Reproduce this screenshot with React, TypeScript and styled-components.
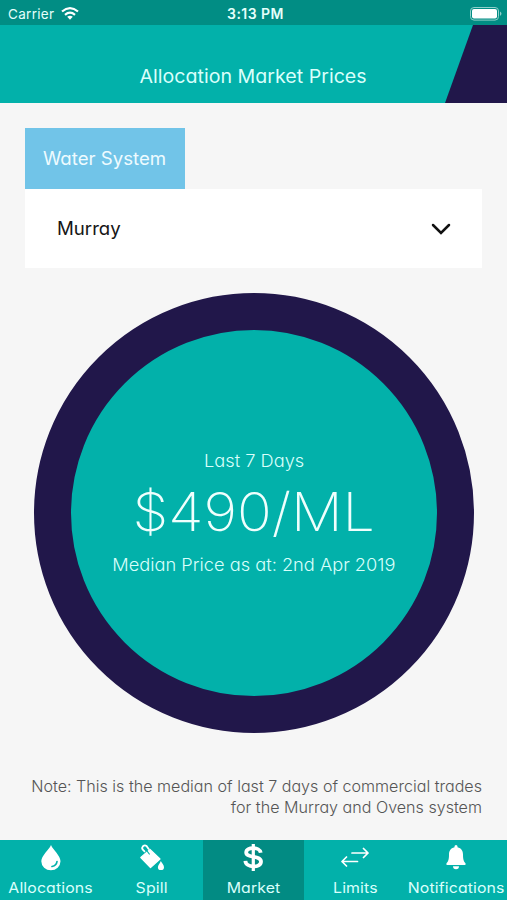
import React from "react";
import styled, { createGlobalStyle } from "styled-components";

const Global = createGlobalStyle`
  * { box-sizing: border-box; }
  body { margin: 0; background: #f6f6f6; }
`;

const Screen = styled.div`
  width: 507px;
  height: 900px;
  display: flex;
  flex-direction: column;
  overflow: hidden;
  background: #f6f6f6;
  font-family: Inter, "Liberation Sans", sans-serif;
  font-feature-settings: "cv11" 1;
`;

const StatusBar = styled.div`
  height: 25px;
  flex: none;
  display: grid;
  grid-template-columns: 1fr auto 1fr;
  align-items: center;
  padding: 2px 5px 0 8px;
  background: #018d84;
  color: #e4fffb;
  font-size: 13.5px;
  line-height: 20px;
`;

const Carrier = styled.div`
  display: flex;
  align-items: center;
  gap: 7px;
  letter-spacing: 0.3px;
  font-feature-settings: normal;
`;

const Clock = styled.div`
  padding-left: 1px;
  font-size: 14px;
  font-weight: 600;
  letter-spacing: 0.45px;
`;

const BatterySlot = styled.div`
  display: flex;
  justify-content: flex-end;
`;

const Header = styled.header`
  height: 78px;
  flex: none;
  display: flex;
  justify-content: center;
  padding-top: 38px;
  background: #02b1aa;
  position: relative;
`;

const HeaderWedge = styled.div`
  position: absolute;
  top: 0;
  right: 0;
  width: 62px;
  height: 78px;
  background: #21174a;
  clip-path: polygon(28px 0, 100% 0, 100% 100%, 0 100%);
`;

const Title = styled.h1`
  margin: 0;
  font-size: 18.5px;
  line-height: 26px;
  font-weight: 400;
  transform: scaleX(1.06);
  white-space: nowrap;
  color: #d9fffb;
`;

const Main = styled.main`
  flex: 1;
  display: flex;
  flex-direction: column;
  align-items: flex-start;
  padding: 25px 25px 0;
`;

const FieldTab = styled.div`
  width: 160px;
  height: 61px;
  display: flex;
  align-items: center;
  justify-content: center;
  background: #71c4e8;
  color: #eefbff;
  font-size: 18px;
  white-space: nowrap;
`;

const WideText = styled.span<{ $origin?: string }>`
  display: inline-block;
  transform: scaleX(1.035);
  transform-origin: ${(p) => p.$origin ?? "center"};
`;

const Select = styled.div`
  width: 457px;
  height: 79px;
  display: flex;
  align-items: center;
  justify-content: space-between;
  padding: 0 31px 0 32px;
  background: #fff;
  color: #161616;
  font-size: 18px;
`;

const Dial = styled.div`
  width: 440px;
  height: 440px;
  margin: 25px 0 0 9px;
  flex: none;
  display: flex;
  flex-direction: column;
  align-items: center;
  padding-top: 118px;
  border: 37px solid #21174a;
  border-radius: 50%;
  background: #02b1aa;
  color: #d9fffb;
  font-weight: 300;
  white-space: nowrap;
`;

const Caption = styled.div`
  font-size: 17.5px;
  line-height: 26px;
  transform: scaleX(1.042);
`;

const Price = styled.div`
  margin: 5px 0 7px;
  font-size: 53px;
  line-height: 66px;
  font-weight: 200;
  transform: scaleX(1.085);
  color: #effffd;
`;

const Note = styled.p`
  margin: 43px 0 0;
  align-self: stretch;
  text-align: right;
  font-size: 15.5px;
  line-height: 21px;
  font-weight: 300;
  transform: scaleX(1.038);
  transform-origin: right;
  white-space: nowrap;
  color: #555;
`;

const TabBar = styled.nav`
  height: 60px;
  flex: none;
  display: grid;
  grid-template-columns: repeat(5, 1fr);
  background: #02b1aa;
`;

const Tab = styled.div<{ $active?: boolean }>`
  display: flex;
  flex-direction: column;
  align-items: center;
  min-width: 0;
  padding-top: 3px;
  background: ${(p) => (p.$active ? "#028b83" : "transparent")};
  color: #d9fffb;
`;

const TabLabel = styled.span`
  font-size: 14.5px;
  line-height: 20px;
  letter-spacing: 0.1px;
  transform: scaleX(1.095);
  white-space: nowrap;
`;

const IconSlot = styled.div`
  height: 35px;
  display: flex;
  align-items: flex-start;
  color: #fff;
  svg { display: block; }
`;

const Wifi = () => (
  <svg width="18" height="13" viewBox="0 0 18 13" fill="none" stroke="#fff" strokeWidth="2.2">
    <path d="M1 4.5Q9-2.2 17 4.5" />
    <path d="M4 7.8Q9 3.5 14 7.8" />
    <path d="M9 12.7L6.2 9.8Q9 7.8 11.8 9.8Z" fill="#fff" stroke="none" />
  </svg>
);

const Battery = () => (
  <svg width="33" height="14" viewBox="0 0 33 14">
    <rect x="1.5" y="0.5" width="28" height="12.6" rx="3.5" fill="none" stroke="#8fd0ca" />
    <rect x="3" y="2" width="25" height="9.6" rx="2" fill="#fff" />
    <path d="M31 4.6Q34 6.8 31 9Z" fill="#8fd0ca" />
  </svg>
);

const Chevron = () => (
  <svg width="20" height="14" viewBox="0 0 20 14" fill="none" stroke="#111" strokeWidth="2.5" strokeLinecap="round" strokeLinejoin="miter">
    <path d="M2 3L10 11L18 3" />
  </svg>
);

const Drop = () => (
  <svg width="22" height="29" viewBox="0 0 22 29">
    <path d="M11 2C13 7 20.5 12.5 20.5 18.3A9.6 9 0 0 1 1.3 18.3C1.3 12.5 9 7 11 2Z" fill="currentColor" />
    <path d="M17 18.5Q16.5 22.5 12 23.5" fill="none" stroke="#02b1aa" strokeWidth="1.7" strokeLinecap="round" />
  </svg>
);

const Bucket = () => (
  <svg width="26" height="29" viewBox="0 0 26 29">
    <path d="M6 8.8L3.6 6.5Q2.6 4.8 4 3.2Q5.8 1.8 7.5 3L10 6.5" fill="none" stroke="currentColor" strokeWidth="1.8" />
    <path d="M11 6.5L21 16L11.5 24.5L1.8 14.5Z" fill="currentColor" stroke="currentColor" strokeWidth="1.2" strokeLinejoin="round" />
    <path d="M6.5 6L10.3 11" fill="none" stroke="#02b1aa" strokeWidth="1.2" strokeLinecap="round" />
    <path d="M21.8 18C22.8 20.3 25 21.8 25 24.2A3 2.8 0 0 1 18.9 24.2C18.9 22 21 20.3 21.8 18Z" fill="currentColor" />
  </svg>
);

const Dollar = () => (
  <svg width="22" height="29" viewBox="0 0 22 29" fill="none" stroke="currentColor" strokeWidth="3.8">
    <path d="M18.7 9.7C18 3.8 4.2 3.5 4.2 9.4C4.2 15.5 19 11.8 19 18.7C19 25.2 3.8 25.2 3.4 17.8" />
    <path d="M11.3 1V28" strokeWidth="3.2" />
  </svg>
);

const Arrows = () => (
  <svg width="28" height="29" viewBox="0 0 28 29" fill="none" stroke="currentColor" strokeWidth="1.7" strokeLinecap="round" strokeLinejoin="round">
    <path d="M11 10H27M22.5 5.5L27 10L22.5 14.5" />
    <path d="M16.5 18.5H1M5.5 14L1 18.5L5.5 23" />
  </svg>
);

const Bell = () => (
  <svg width="22" height="29" viewBox="0 0 22 29" fill="currentColor">
    <path d="M9.5 4.2V3.5A1.5 1.5 0 0 1 12.5 3.5V4.2C16.5 5 18 8 18 11.5C18 17 19 18.5 20.4 20.2C21 21 20.5 22 19.5 22H2.5C1.5 22 1 21 1.6 20.2C3 18.5 4 17 4 11.5C4 8 5.5 5 9.5 4.2Z" />
    <path d="M8 23.2H14A3 3 0 0 1 8 23.2Z" />
  </svg>
);

const tabs = [
  { label: "Allocations", Icon: Drop },
  { label: "Spill", Icon: Bucket },
  { label: "Market", Icon: Dollar, active: true },
  { label: "Limits", Icon: Arrows },
  { label: "Notifications", Icon: Bell },
];

export default function App() {
  return (
    <>
      <Global />
      <Screen>
        <StatusBar>
          <Carrier>Carrier <Wifi /></Carrier>
          <Clock>3:13 PM</Clock>
          <BatterySlot><Battery /></BatterySlot>
        </StatusBar>
        <Header>
          <Title>Allocation Market Prices</Title>
          <HeaderWedge />
        </Header>
        <Main>
          <FieldTab><WideText>Water System</WideText></FieldTab>
          <Select><WideText $origin="left">Murray</WideText> <Chevron /></Select>
          <Dial>
            <Caption>Last 7 Days</Caption>
            <Price>$490/ML</Price>
            <Caption>Median Price as at: 2nd Apr 2019</Caption>
          </Dial>
          <Note>
            Note: This is the median of last 7 days of commercial trades
            <br />
            for the Murray and Ovens system
          </Note>
        </Main>
        <TabBar>
          {tabs.map(({ label, Icon, active }) => (
            <Tab key={label} $active={active}>
              <IconSlot><Icon /></IconSlot>
              <TabLabel>{label}</TabLabel>
            </Tab>
          ))}
        </TabBar>
      </Screen>
    </>
  );
}
